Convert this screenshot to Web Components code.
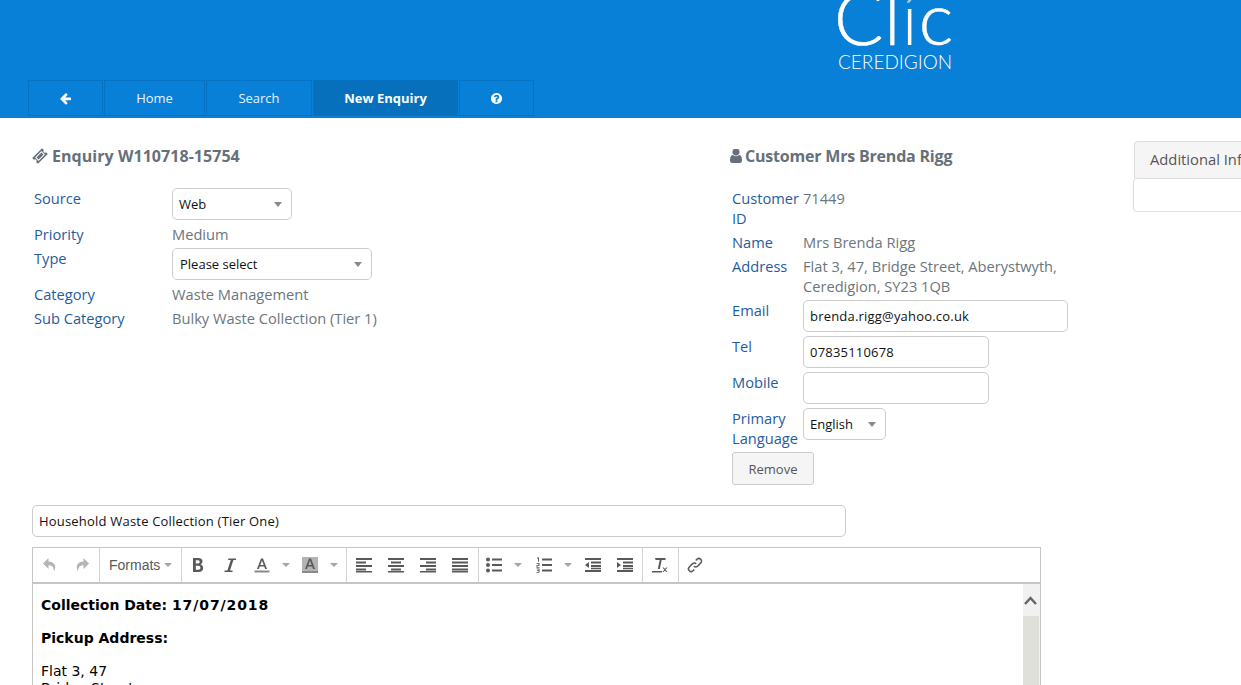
<!DOCTYPE html>
<html>
<head>
<meta charset="utf-8">
<title>New Enquiry</title>
<style>
  html, body { margin: 0; height: 685px; overflow: hidden; background: #fff; }
  body { font: 14.65px/20px "Open Sans", sans-serif; color: #6c757d; }
</style>
</head>
<body>

<cc-app>
  <cc-header slot="header">
    <cc-nav-item><svg width="13" height="13" viewBox="0 0 1792 1792" fill="#fff"><path d="M1664 896v128q0 53-32.5 90.5t-84.5 37.5h-704l293 294q38 36 38 90t-38 90l-75 76q-37 37-90 37-52 0-91-37l-651-652q-37-37-37-90 0-52 37-91l651-650q38-38 91-38 52 0 90 38l75 74q38 38 38 91t-38 91l-293 293h704q52 0 84.5 37.5t32.5 90.5z"/></svg></cc-nav-item>
    <cc-nav-item style="width:101px">Home</cc-nav-item>
    <cc-nav-item style="width:106px">Search</cc-nav-item>
    <cc-nav-item style="width:145px" active>New Enquiry</cc-nav-item>
    <cc-nav-item><svg width="13" height="13" viewBox="0 0 1792 1792" fill="#fff"><path d="M1024 1376v-192q0-14-9-23t-23-9h-192q-14 0-23 9t-9 23v192q0 14 9 23t23 9h192q14 0 23-9t9-23zm256-672q0-88-55.5-163t-138.5-116-170-41q-243 0-371 213-15 24 8 42l132 100q7 6 19 6 16 0 25-12 53-68 86-92 34-24 86-24 48 0 85.5 26t37.5 59q0 38-20 61t-68 45q-63 28-115.5 86.5t-52.5 125.5v36q0 14 9 23t23 9h192q14 0 23-9t9-23q0-19 21.5-49.5t54.5-49.5q32-18 49-28.5t46-35 44.5-48 28-60.5 12.5-81zm384 192q0 209-103 385.5t-279.5 279.5-385.5 103-385.5-103-279.5-279.5-103-385.5 103-385.5 279.5-279.5 385.5-103 385.5 103 279.5 279.5 103 385.5z"/></svg></cc-nav-item>
  </cc-header>

  <cc-panel slot="enquiry" label-width="138px">
    <svg slot="icon" width="16" height="16" viewBox="0 0 16 16"><g transform="rotate(-45 8 8)"><path fill="#66707a" fill-rule="evenodd" d="M1 4h14v2.400a1.600 1.600 0 0 0 0 3.200V12H1V9.600a1.600 1.600 0 0 0 0-3.200zM3.500 5.500v5h9v-5z"/><rect x="4.500" y="6.500" width="7" height="3" fill="#66707a"/></g></svg>
    <span slot="title" style="letter-spacing:.05px">Enquiry W110718-15754</span>
    <cc-field label="Source"><cc-select style="width:120px">Web</cc-select></cc-field>
    <cc-field label="Priority">Medium</cc-field>
    <cc-field label="Type"><cc-select style="width:200px;padding-left:7px">Please select</cc-select></cc-field>
    <cc-field label="Category">Waste Management</cc-field>
    <cc-field label="Sub Category">Bulky Waste Collection (Tier 1)</cc-field>
  </cc-panel>

  <cc-panel slot="customer" label-width="71px" inset="2px">
    <svg slot="icon" width="12" height="14" viewBox="256 200 1280 1470" fill="#66707a" preserveAspectRatio="none"><path d="M1536 1399q0 109-62.500 187t-150.500 78h-854q-88 0-150.500-78t-62.500-187q0-85 8.500-160.500t31.500-152 58.500-131 94-89 134.500-34.500q131 128 313 128t313-128q76 0 134.500 34.500t94 89 58.500 131 31.500 152 8.500 160.500zm-256-887q0 159-112.500 271.500t-271.500 112.500-271.500-112.500-112.500-271.500 112.500-271.500 271.500-112.500 271.500 112.500 112.500 271.500z"/></svg>
    <span slot="title" style="margin-left:-1px">Customer Mrs Brenda Rigg</span>
    <cc-field label="Customer ID">71449</cc-field>
    <cc-field label="Name">Mrs Brenda Rigg</cc-field>
    <cc-field label="Address">Flat 3, 47, Bridge Street, Aberystwyth, Ceredigion, SY23 1QB</cc-field>
    <cc-field label="Email"><cc-input style="width:265px" value="brenda.rigg@yahoo.co.uk"></cc-input></cc-field>
    <cc-field label="Tel"><cc-input style="width:186px" value="07835110678"></cc-input></cc-field>
    <cc-field label="Mobile"><cc-input style="width:186px" value=""></cc-input></cc-field>
    <cc-field label="Primary Language"><cc-select style="width:83px">English</cc-select></cc-field>
    <cc-button>Remove</cc-button>
  </cc-panel>

  <cc-tabs slot="tabs">Additional Information</cc-tabs>

  <cc-input slot="subject" style="width:814px" value="Household Waste Collection (Tier One)"></cc-input>

  <cc-editor slot="editor">
    <p><b>Collection Date: <span style="letter-spacing:.9px">17/07/2018</span></b></p>
    <p><b>Pickup Address:</b></p>
    <p>Flat 3, 47<br>Bridge Street<br>Aberystwyth</p>
  </cc-editor>
</cc-app>

<template id="cc-app-template">
  <style>
    :host { display: block; }
    .main { display: grid; grid-template-columns: 698px 403px 1fr; padding: 27px 0 0 32px; height: 387px; box-sizing: border-box; }
    .bottom { padding-left: 32px; display: flex; flex-flow: column nowrap; gap: 10px; }
  </style>
  <slot name="header"></slot>
  <div class="main">
    <slot name="enquiry"></slot>
    <slot name="customer"></slot>
    <slot name="tabs"></slot>
  </div>
  <div class="bottom">
    <slot name="subject"></slot>
    <slot name="editor"></slot>
  </div>
</template>

<template id="cc-header-template">
  <style>
    :host { display: block; height: 118px; background: #0880d7; overflow: hidden; }
    .logo-row { height: 80px; padding-left: 838px; box-sizing: border-box; display: flex; flex-flow: column nowrap; justify-content: flex-end; }
    .clic { font: 300 73px/32px Lato, sans-serif; color: #fff; height: 46px; margin-left: -4px; white-space: nowrap; letter-spacing: 1px; -webkit-text-stroke: .6px #fff; }
    .clic span { background: linear-gradient(#a9c8e6 32px, #fff 32px); -webkit-background-clip: text; background-clip: text; color: transparent; -webkit-text-stroke: 0; }
    .name { font: 300 19px/17px Lato, sans-serif; color: #fff; margin: 6px 0 10px; white-space: nowrap; }
    nav { display: flex; flex-flow: row nowrap; padding-left: 28px; gap: 1px; }
  </style>
  <div class="logo-row">
    <div class="clic">Cl<span>í</span>c</div>
    <div class="name">CEREDIGION</div>
  </div>
  <nav><slot></slot></nav>
</template>

<template id="cc-nav-item-template">
  <style>
    :host { display: flex; align-items: center; justify-content: center; box-sizing: border-box; width: 75px; height: 36px; border: 1px solid #0672c3; color: #e8f3fb; font-size: 13px; }
    :host([active]) { background: #0670bd; color: #fff; font-weight: 700; }
  </style>
  <slot></slot>
</template>

<template id="cc-panel-template">
  <style>
    :host { display: block; }
    h2 { margin: 0 0 21px; font-size: 16px; line-height: 22px; font-weight: 700; color: #66707a; display: flex; align-items: center; gap: 4px; letter-spacing: -.2px; white-space: nowrap; }
    .rows { display: flex; flex-flow: column nowrap; gap: 4px; padding-left: var(--inset, 2px); }
  </style>
  <h2><slot name="icon"></slot><slot name="title"></slot></h2>
  <div class="rows"><slot></slot></div>
</template>

<template id="cc-field-template">
  <style>
    :host { display: grid; grid-template-columns: var(--label-width, 138px) 1fr; }
    .label { color: #1f5c9e; }
    .value { max-width: 270px; }
  </style>
  <div class="label"></div>
  <div class="value"><slot></slot></div>
</template>

<template id="cc-select-template">
  <style>
    :host { display: flex; align-items: center; justify-content: space-between; box-sizing: border-box; height: 32px; padding: 0 7px 0 6px; border: 1px solid #ccc; border-radius: 5px; background: #fff; color: #111; font-size: 13px; }
    .caret { border: 4px solid transparent; border-top: 5px solid #8a8a8a; border-bottom: 0; width: 0; height: 0; margin-right: 2px; }
  </style>
  <slot></slot><span class="caret"></span>
</template>

<template id="cc-input-template">
  <style>
    :host { display: block; box-sizing: border-box; height: 32px; border: 1px solid #ccc; border-radius: 5px; background: #fff; }
    input { display: block; box-sizing: border-box; width: 100%; height: 100%; padding: 0 6px; margin: 0; border: 0; background: none; outline: 0; color: #111; font: 13px "Open Sans", sans-serif; letter-spacing: .2px; }
  </style>
  <input type="text">
</template>

<template id="cc-button-template">
  <style>
    :host { display: flex; align-items: center; justify-content: center; box-sizing: border-box; width: 82px; height: 33px; border: 1px solid #ccc; border-radius: 3px; background: #f5f5f5; color: #555; font-size: 13px; }
  </style>
  <slot></slot>
</template>

<template id="cc-tabs-template">
  <style>
    :host { display: block; overflow: hidden; margin: -4px 0 0; white-space: nowrap; }
    .tab { display: block; box-sizing: border-box; height: 37px; margin-left: 1px; padding: 7px 15px; border: 1px solid #ddd; border-bottom: 0; border-radius: 4px 4px 0 0; background: #f5f5f5; color: #555; font-size: 14.75px; line-height: 20px; width: 300px; }
    .body { box-sizing: border-box; width: 300px; height: 34px; border: 1px solid #ddd; border-radius: 4px; background: #fff; }
  </style>
  <div class="tab"><slot></slot></div>
  <div class="body"></div>
</template>

<template id="cc-editor-template">
  <style>
    :host { display: block; box-sizing: border-box; width: 1009px; height: 300px; border: 1px solid #c5c5c5; background: #fff; }
    .toolbar { display: flex; flex-flow: row nowrap; height: 34px; border-bottom: 2px solid #c5c5c5; box-sizing: content-box; }
    .group { display: flex; flex-flow: row nowrap; align-items: center; border-right: 1px solid #d4d4d4; box-sizing: border-box; height: 34px; padding: 0 1px; }
    .group:last-child { border-right: 0; }
    .tool { width: 32px; height: 34px; display: flex; align-items: center; justify-content: center; }
    .tool.caret { width: 16px; }
    .tool.caret::after { content: ""; border: 4px solid transparent; border-top: 4px solid #a6a6a6; border-bottom: 0; }
    .formats { font: 14px "Liberation Sans", Arial, sans-serif; color: #595959; display: flex; align-items: center; gap: 4px; padding: 0 4px 0 9px; height: 34px; }
    .formats::after { content: ""; border: 4px solid transparent; border-top: 4px solid #a6a6a6; border-bottom: 0; }
    svg { display: block; }
    .content { display: flex; flex-flow: row nowrap; height: 264px; }
    .doc { flex: 1; padding: 0 8px; font: 14px/17px "DejaVu Sans", Verdana, sans-serif; color: #000; overflow: hidden; }
    .bar { flex: 0 0 17px; display: flex; flex-flow: column nowrap; background: #f1f1f1; }
    .bar .up { height: 32px; padding-right: 2px; display: flex; align-items: center; justify-content: center; }
    .bar .track { flex: 1; background: #e0e0da; margin: 0 1px 0 0; }
    ::slotted(p) { margin: 16px 0; }
    ::slotted(p:first-child) { margin-top: 13px; }
    ::slotted(p:nth-child(2)) { margin-bottom: 15px; }
  </style>
  <div class="toolbar">
    <div class="group" style="width:67px">
      <div class="tool"><svg width="16" height="16" viewBox="0 0 16 16" fill="#b5b5b5"><path d="M6.500 1 1 6.500 6.500 12V8.200c3.200 0 5 1.200 5.600 6.300C14.500 9 13 4.700 6.500 4.400z"/></svg></div>
      <div class="tool"><svg width="16" height="16" viewBox="0 0 16 16" fill="#b5b5b5"><path d="M9.500 1 15 6.500 9.500 12V8.200c-3.200 0-5 1.200-5.600 6.300C1.500 9 3 4.700 9.500 4.400z"/></svg></div>
    </div>
    <div class="group" style="width:82px;padding:0">
      <div class="formats">Formats</div>
    </div>
    <div class="group" style="width:165px;padding-left:0">
      <div class="tool"><svg width="16" height="16" viewBox="0 0 16 16" fill="#595959"><path fill-rule="evenodd" d="M3 1h5.500c2.600 0 4 1.300 4 3.300 0 1.500-.8 2.600-2 3.100 1.700.4 2.700 1.700 2.700 3.500 0 2.500-1.800 4.100-4.600 4.100H3zm2.800 2.300v3.300h2.100c1.100 0 1.800-.6 1.800-1.700 0-1-.7-1.600-1.800-1.600zm0 5.500v3.900h2.500c1.300 0 2.100-.8 2.100-2 0-1.200-.8-1.900-2.100-1.900z"/></svg></div>
      <div class="tool"><svg width="16" height="16" viewBox="0 0 16 16" fill="#595959"><path d="M6.500 1.500H14V3h-2.600L8 13.500h2.500V15H2.500v-1.500h2.900L8.800 3H6.100z"/></svg></div>
      <div class="tool"><svg width="16" height="16" viewBox="0 0 16 16" fill="#595959"><path fill-rule="evenodd" d="M7 1.500h2L13 12h-1.900l-.9-2.500H5.800L4.900 12H3zM6.300 8h3.400L8 3.500z"/><rect x="0.500" y="13.500" width="15" height="2" fill="#8a8a8a"/></svg></div>
      <div class="tool caret"></div>
      <div class="tool"><svg width="16" height="16" viewBox="0 0 16 16"><rect width="16" height="14" fill="#b3b3b3"/><path fill="#595959" fill-rule="evenodd" d="M7 1.500h2L13 12h-1.900l-.9-2.500H5.800L4.900 12H3zM6.300 8h3.400L8 3.500z"/><rect y="14" width="16" height="2" fill="#8a8a8a"/></svg></div>
      <div class="tool caret"></div>
    </div>
    <div class="group" style="width:132px">
      <div class="tool"><svg width="16" height="16" viewBox="0 0 16 16" fill="#595959"><path d="M0 1h16v2H0zM0 4.500h10v2H0zM0 8h16v2H0zM0 11.500h10v2H0zM0 14h16v1.500H0z"/></svg></div>
      <div class="tool"><svg width="16" height="16" viewBox="0 0 16 16" fill="#595959"><path d="M0 1h16v2H0zM3 4.500h10v2H3zM0 8h16v2H0zM3 11.500h10v2H3zM0 14h16v1.500H0z"/></svg></div>
      <div class="tool"><svg width="16" height="16" viewBox="0 0 16 16" fill="#595959"><path d="M0 1h16v2H0zM6 4.500h10v2H6zM0 8h16v2H0zM6 11.500h10v2H6zM0 14h16v1.500H0z"/></svg></div>
      <div class="tool"><svg width="16" height="16" viewBox="0 0 16 16" fill="#595959"><path d="M0 1h16v2H0zM0 4.500h16v2H0zM0 8h16v2H0zM0 11.500h16v2H0zM0 14h16v1.500H0z"/></svg></div>
    </div>
    <div class="group" style="width:164px;padding:0">
      <div class="tool" style="margin-left:-1px"><svg width="16" height="16" viewBox="0 0 16 16" fill="#595959"><circle cx="2" cy="2.500" r="2"/><circle cx="2" cy="8" r="2"/><circle cx="2" cy="13.500" r="2"/><path d="M6 1.500h10v2H6zM6 7h10v2H6zM6 12.500h10v2H6z"/></svg></div>
      <div class="tool caret"></div>
      <div class="tool" style="margin-left:2px"><svg width="16" height="16" viewBox="0 0 16 16" fill="#595959"><path d="M6 1.500h10v2H6zM6 7h10v2H6zM6 12.500h10v2H6z"/><path d="M1 .5h2v4.300H2V1.500H1zM.5 6h3v3h-2v1h2v.8h-3V8.300h2v-1.500h-2zM.5 11.500h3v4.300h-3V15h2v-1H1v-.8h1.500v-1h-2z"/></svg></div>
      <div class="tool caret"></div>
      <div class="tool" style="margin-left:1px"><svg width="16" height="16" viewBox="0 0 16 16" fill="#595959"><path d="M0 1h16v2H0zM6 4.500h10v2H6zM6 8h10v2H6zM0 13h16v2H0zM6 10.700h10v1.500H6zM4 5v6L0 8z"/></svg></div>
      <div class="tool"><svg width="16" height="16" viewBox="0 0 16 16" fill="#595959"><path d="M0 1h16v2H0zM6 4.500h10v2H6zM6 8h10v2H6zM0 13h16v2H0zM6 10.700h10v1.500H6zM0 5v6l4-3z"/></svg></div>
    </div>
    <div class="group" style="width:36px;padding-left:1px">
      <div class="tool"><svg width="16" height="16" viewBox="0 0 16 16" fill="#595959"><path d="M3 1h10.500v2H9.700L7.800 12h-2l1.900-9H3.600zM0 14h10v1.500H0zM10.500 10.500h1.300l1.200 1.500 1.300-1.500h1.200l-1.900 2.200 1.900 2.300h-1.300L13 13.400 11.700 15h-1.300l2-2.300z"/></svg></div>
    </div>
    <div class="group" style="width:35px;padding-left:0">
      <div class="tool"><svg width="16" height="16" viewBox="0 0 16 16" fill="none" stroke="#595959" stroke-width="1.600"><path d="M6.800 9.200a2.600 2.600 0 0 0 3.700 0l3.200-3.200a2.600 2.600 0 0 0-3.700-3.700L8.800 3.500"/><path d="M9.200 6.800a2.600 2.600 0 0 0-3.700 0L2.300 10a2.600 2.600 0 0 0 3.700 3.700l1.200-1.200"/></svg></div>
    </div>
  </div>
  <div class="content">
    <div class="doc"><slot></slot></div>
    <div class="bar">
      <div class="up"><svg width="13" height="9" viewBox="0 0 13 9" fill="none" stroke="#666" stroke-width="2.500"><path d="M1 8l5.500-6L12 8"/></svg></div>
      <div class="track"></div>
    </div>
  </div>
</template>

<script>
  // every element here only clones its template, so the classes are made from one helper
  function shadowClass (id, after) {
    return class extends HTMLElement {
      constructor () {
        super();
        this.attachShadow({mode: 'open'});
        this.shadowRoot.appendChild(document.getElementById(id).content.cloneNode(true));
      }
      connectedCallback () {
        if (after) after.call(this);
      }
    };
  }

  customElements.define('cc-app', shadowClass('cc-app-template'));
  customElements.define('cc-header', shadowClass('cc-header-template'));
  customElements.define('cc-nav-item', shadowClass('cc-nav-item-template'));
  customElements.define('cc-panel', shadowClass('cc-panel-template', function () {
    this.style.setProperty('--label-width', this.getAttribute('label-width'));
    this.style.setProperty('--inset', this.getAttribute('inset') || '2px');
  }));
  customElements.define('cc-field', shadowClass('cc-field-template', function () {
    this.shadowRoot.querySelector('.label').textContent = this.getAttribute('label');
  }));
  customElements.define('cc-select', shadowClass('cc-select-template'));
  customElements.define('cc-input', shadowClass('cc-input-template', function () {
    this.shadowRoot.querySelector('input').value = this.getAttribute('value') || '';
  }));
  customElements.define('cc-button', shadowClass('cc-button-template'));
  customElements.define('cc-tabs', shadowClass('cc-tabs-template'));
  customElements.define('cc-editor', shadowClass('cc-editor-template'));
</script>
</body>
</html>
